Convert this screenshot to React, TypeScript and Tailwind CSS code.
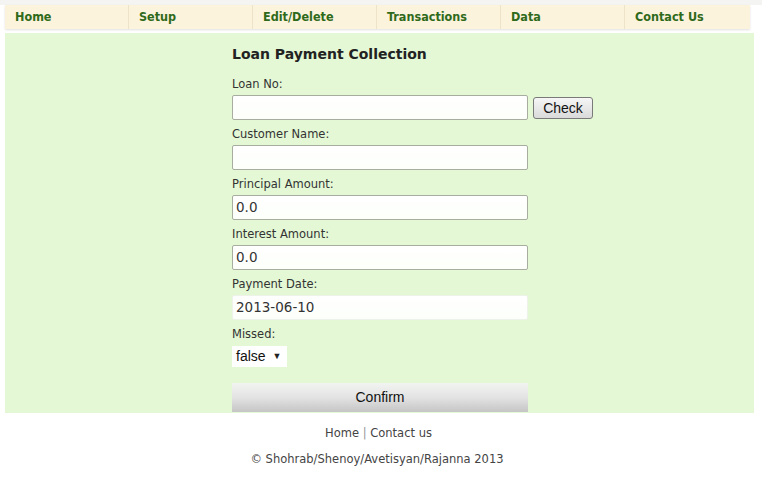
import React from "react";

const navItems = ["Home", "Setup", "Edit/Delete", "Transactions", "Data", "Contact Us"];

function Field({ label, value, extra, faint }: { label: string; value?: string; extra?: React.ReactNode; faint?: boolean }) {
  return (
    <div className="flex flex-col">
      <div className="h-[16px] leading-[16px] text-[11.5px] text-[#333]">{label}</div>
      <div className="mt-[3px] flex items-center gap-[5px]">
        <div
          className={`w-[296px] h-[25px] rounded-[2px] border bg-gradient-to-b from-white to-[#fcfffa] pl-[3px] flex items-center text-[13.5px] text-[#333] ${
            faint ? "border-[#eef3ea]" : "border-[#a7ae9f]"
          }`}
        >
          {value}
        </div>
        {extra}
      </div>
    </div>
  );
}

export default function App() {
  return (
    <div className="w-[762px] h-[480px] bg-white" style={{ fontFamily: '"DejaVu Sans", Verdana, sans-serif' }}>
      <div className="h-[5px] bg-[#f4f5f2]" />
      <div className="ml-[5px] w-[745px] h-[24px] bg-[#fcf3dd] flex shadow-[0_1px_2px_rgba(0,0,0,0.12)]">
        {navItems.map((n, i) => (
          <div
            key={n}
            className={`w-[124px] h-full flex items-center pl-[10px] text-[12.5px] font-bold text-[#2f6a1a] ${
              i < navItems.length - 1 ? "border-r border-[#ece3c8]" : ""
            }`}
            style={{ fontFamily: '"DejaVu Sans Condensed", "DejaVu Sans", sans-serif' }}
          >
            {n}
          </div>
        ))}
      </div>
      <div className="ml-[5px] mt-[4px] w-[749px] h-[380px] bg-[#e4f8d5] pl-[227px] pt-[11px]">
        <div className="text-[14px] font-bold text-[#222] leading-[20px]">Loan Payment Collection</div>
        <div className="mt-[12px] flex flex-col gap-[6px]">
          <Field
            label="Loan No:"
            extra={
              <button
                className="w-[60px] h-[22px] rounded-[3px] border border-[#7a7a7a] bg-gradient-to-b from-[#f6f6f6] to-[#dadada] text-[14px] text-[#111] leading-none"
                style={{ fontFamily: '"Liberation Sans", Arial, sans-serif' }}
              >
                Check
              </button>
            }
          />
          <Field label="Customer Name:" />
          <Field label="Principal Amount:" value="0.0" />
          <Field label="Interest Amount:" value="0.0" />
          <Field label="Payment Date:" value="2013-06-10" faint />
          <div className="flex flex-col">
            <div className="h-[16px] leading-[16px] text-[11.5px] text-[#333]">Missed:</div>
            <div
              className="mt-[4px] w-[55px] h-[21px] bg-white flex items-center pl-[4px] text-[14px] text-[#111]"
              style={{ fontFamily: '"Liberation Sans", Arial, sans-serif' }}
            >
              false
              <span className="ml-[7px] text-[9px] text-[#222]">▼</span>
            </div>
          </div>
        </div>
        <div
          className="mt-[16px] w-[296px] h-[29px] bg-gradient-to-b from-[#f2f4f2] via-[#e2e3e2] to-[#c4c5c4] flex items-center justify-center text-[14px] text-[#111]"
          style={{ fontFamily: '"Liberation Sans", Arial, sans-serif' }}
        >
          Confirm
        </div>
      </div>
      <div className="mt-[12px] text-center text-[11.5px] text-[#444] leading-[16px] pr-[5px]">
        Home <span className="text-[#999]">|</span> Contact us
      </div>
      <div className="mt-[10px] text-center text-[11.5px] text-[#444] leading-[16px] pr-[8px]">
        © Shohrab/Shenoy/Avetisyan/Rajanna 2013
      </div>
    </div>
  );
}
